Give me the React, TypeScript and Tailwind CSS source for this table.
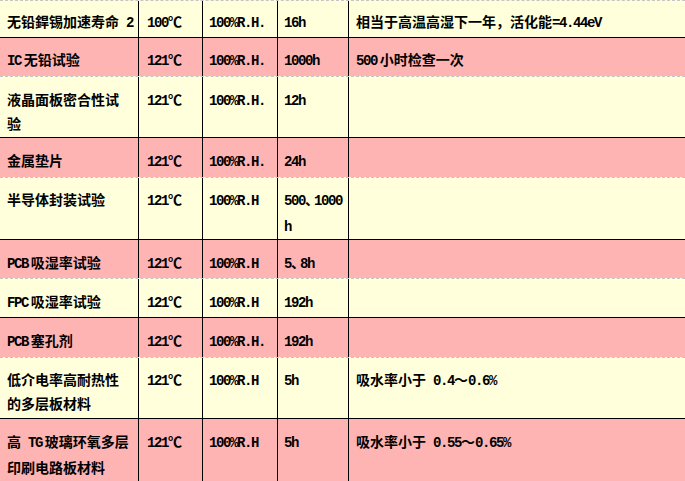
import React from "react";

// table rows: label lines, temperature, humidity, time lines, note
interface Row {
  name: string[];
  temp: string;
  rh: string;
  time: string[];
  note: string;
  pink: boolean;
  h: string;
  pt: string;
}

const T = "\u2009";

const rows: Row[] = [
  { name: ["无铅銲锡加速寿命 2"], temp: "100℃", rh: "100%R.H.", time: ["16h"], note: "相当于高温高湿下一年，活化能=4.44eV", pink: false, h: "h-[37px]", pt: "pt-[8px]" },
  { name: [`IC${T}无铅试验`], temp: "121℃", rh: "100%R.H.", time: ["1000h"], note: `500${T}小时检查一次`, pink: true, h: "h-[39px]", pt: "pt-[9px]" },
  { name: ["液晶面板密合性试", "验"], temp: "121℃", rh: "100%R.H.", time: ["12h"], note: "", pink: false, h: "h-[61px]", pt: "pt-[10px]" },
  { name: ["金属垫片"], temp: "121℃", rh: "100%R.H.", time: ["24h"], note: "", pink: true, h: "h-[40px]", pt: "pt-[10px]" },
  { name: ["半导体封装试验"], temp: "121℃", rh: "100%R.H", time: ["500、1000", "h"], note: "", pink: false, h: "h-[62px]", pt: "pt-[9px]" },
  { name: [`PCB${T}吸湿率试验`], temp: "121℃", rh: "100%R.H", time: ["5、8h"], note: "", pink: true, h: "h-[39px]", pt: "pt-[10px]" },
  { name: [`FPC${T}吸湿率试验`], temp: "121℃", rh: "100%R.H", time: ["192h"], note: "", pink: false, h: "h-[39px]", pt: "pt-[10px]" },
  { name: [`PCB${T}塞孔剂`], temp: "121℃", rh: "100%R.H.", time: ["192h"], note: "", pink: true, h: "h-[40px]", pt: "pt-[10px]" },
  { name: ["低介电率高耐热性", "的多层板材料"], temp: "121℃", rh: "100%R.H", time: ["5h"], note: "吸水率小于 0.4～0.6%", pink: false, h: "h-[61px]", pt: "pt-[9px]" },
  { name: [`高 TG${T}玻璃环氧多层`, "印刷电路板材料"], temp: "121℃", rh: "100%R.H", time: ["5h"], note: "吸水率小于 0.55～0.65%", pink: true, h: "h-[64px]", pt: "pt-[10px]" },
];

// ascii runs get the narrow serif mono, the rest falls to the CJK font
function Mix({ t }: { t: string }) {
  const parts = t.split(/([\x20-\x7E]+|、)/);
  return (
    <>
      {parts.map((s, i) => {
        if (i % 2 === 0) return <React.Fragment key={i}>{s}</React.Fragment>;
        if (s === "、")
          return (
            <span key={i} className="tracking-[-5px]">
              {s}
            </span>
          );
        return (
          <span key={i} className="font-['Liberation_Mono',monospace] tracking-[-1.4px]">
            {s}
          </span>
        );
      })}
    </>
  );
}

function Lines({ lines }: { lines: string[] }) {
  return (
    <>
      {lines.map((l, i) => (
        <div key={i} className="whitespace-nowrap">
          <Mix t={l} />
        </div>
      ))}
    </>
  );
}

export default function App() {
  return (
    <div className="w-[685px] h-[481px] overflow-hidden bg-[#ffffdc] font-['Noto_Sans_CJK_SC',sans-serif] font-bold text-[14px] leading-[24px] text-black">
      {rows.map((r, i) => (
        <div
          key={i}
          className={`grid grid-cols-[139px_64px_75px_71px_1fr] ${r.h} ${
            r.pink ? "bg-[#ffb4b4] border-t border-black" : "bg-[#ffffdc] border-t border-dashed border-[#c4c4c4]"
          }`}
        >
          <div className={`border-r border-black pl-[7px] ${r.pt}`}>
            <Lines lines={r.name} />
          </div>
          <div className={`border-r border-black pl-[8px] ${r.pt}`}>
            <Lines lines={[r.temp]} />
          </div>
          <div className={`border-r border-black pl-[6px] ${r.pt}`}>
            <Lines lines={[r.rh]} />
          </div>
          <div className={`border-r border-black pl-[6px] ${r.pt}`}>
            <Lines lines={r.time} />
          </div>
          <div className={`pl-[7px] ${r.pt}`}>
            {r.note && <Lines lines={[r.note]} />}
          </div>
        </div>
      ))}
    </div>
  );
}
